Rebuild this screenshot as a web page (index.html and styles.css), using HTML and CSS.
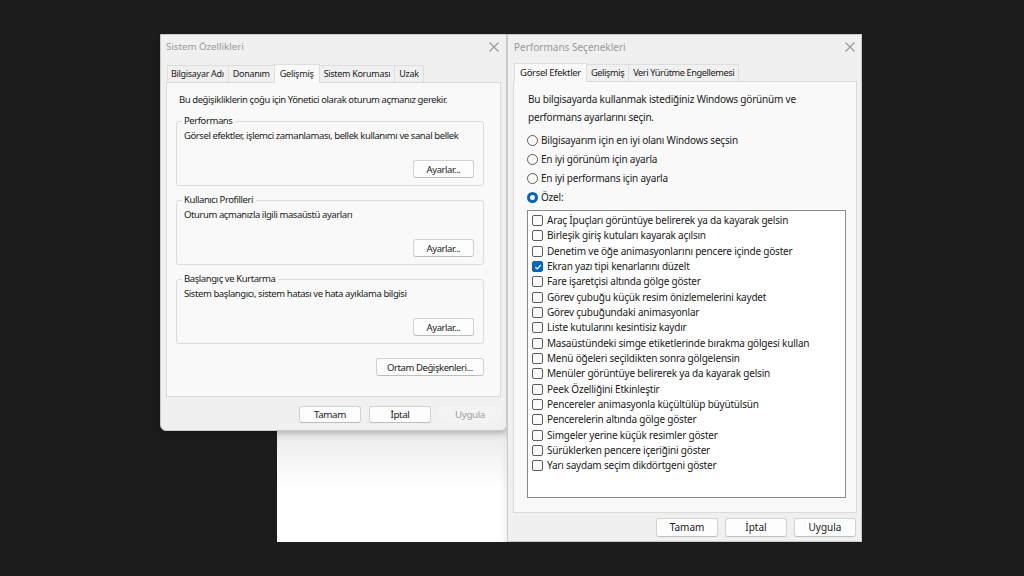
FILE: index.html
```html
<!DOCTYPE html>
<html lang="tr">
<head>
<meta charset="utf-8">
<title>Sistem Özellikleri</title>
<link rel="stylesheet" href="styles.css">
</head>
<body>
<div class="desktop">
  <div class="backwin"></div>

  <div class="dialog sys">
    <div class="titlebar">
      <span class="title">Sistem Özellikleri</span>
      <svg class="close" width="10" height="10" viewBox="0 0 10 10"><path d="M0.5 0.5 L9.5 9.5 M9.5 0.5 L0.5 9.5" stroke="#9a9a9a" stroke-width="1.1" fill="none"/></svg>
    </div>
    <div class="tabs">
      <span class="tab">Bilgisayar Adı</span>
      <span class="tab">Donanım</span>
      <span class="tab sel">Gelişmiş</span>
      <span class="tab">Sistem Koruması</span>
      <span class="tab">Uzak</span>
    </div>
    <div class="panel">
      <p class="intro">Bu değişikliklerin çoğu için Yönetici olarak oturum açmanız gerekir.</p>
      <div class="group">
        <span class="legend">Performans</span>
        <p class="gtext">Görsel efektler, işlemci zamanlaması, bellek kullanımı ve sanal bellek</p>
        <div class="grow"><button class="btn set">Ayarlar...</button></div>
      </div>
      <div class="group">
        <span class="legend">Kullanıcı Profilleri</span>
        <p class="gtext">Oturum açmanızla ilgili masaüstü ayarları</p>
        <div class="grow"><button class="btn set">Ayarlar...</button></div>
      </div>
      <div class="group">
        <span class="legend">Başlangıç ve Kurtarma</span>
        <p class="gtext">Sistem başlangıcı, sistem hatası ve hata ayıklama bilgisi</p>
        <div class="grow"><button class="btn set">Ayarlar...</button></div>
      </div>
      <div class="envrow"><button class="btn env">Ortam Değişkenleri...</button></div>
    </div>
    <div class="footer">
      <button class="btn fb">Tamam</button>
      <button class="btn fb">İptal</button>
      <button class="btn fb dis">Uygula</button>
    </div>
  </div>

  <div class="dialog perf">
    <div class="titlebar">
      <span class="title">Performans Seçenekleri</span>
      <svg class="close" width="10" height="10" viewBox="0 0 10 10"><path d="M0.5 0.5 L9.5 9.5 M9.5 0.5 L0.5 9.5" stroke="#9a9a9a" stroke-width="1.1" fill="none"/></svg>
    </div>
    <div class="tabs">
      <span class="tab sel">Görsel Efektler</span>
      <span class="tab">Gelişmiş</span>
      <span class="tab">Veri Yürütme Engellemesi</span>
    </div>
    <div class="panel">
      <p class="intro">Bu bilgisayarda kullanmak istediğiniz Windows görünüm ve performans ayarlarını seçin.</p>
      <div class="radios">
        <label class="radio"><span class="rb"></span>Bilgisayarım için en iyi olanı Windows seçsin</label>
        <label class="radio"><span class="rb"></span>En iyi görünüm için ayarla</label>
        <label class="radio"><span class="rb"></span>En iyi performans için ayarla</label>
        <label class="radio"><span class="rb on"></span>Özel:</label>
      </div>
      <div class="listbox">
        <div class="item"><span class="cb"></span>Araç İpuçları görüntüye belirerek ya da kayarak gelsin</div>
        <div class="item"><span class="cb"></span>Birleşik giriş kutuları kayarak açılsın</div>
        <div class="item"><span class="cb"></span>Denetim ve öğe animasyonlarını pencere içinde göster</div>
        <div class="item"><span class="cb on"><svg width="8" height="8" viewBox="0 0 8 8"><path d="M1.3 4.2 L3.2 6 L6.8 2" stroke="#fff" stroke-width="1.2" fill="none"/></svg></span>Ekran yazı tipi kenarlarını düzelt</div>
        <div class="item"><span class="cb"></span>Fare işaretçisi altında gölge göster</div>
        <div class="item"><span class="cb"></span>Görev çubuğu küçük resim önizlemelerini kaydet</div>
        <div class="item"><span class="cb"></span>Görev çubuğundaki animasyonlar</div>
        <div class="item"><span class="cb"></span>Liste kutularını kesintisiz kaydır</div>
        <div class="item"><span class="cb"></span>Masaüstündeki simge etiketlerinde bırakma gölgesi kullan</div>
        <div class="item"><span class="cb"></span>Menü öğeleri seçildikten sonra gölgelensin</div>
        <div class="item"><span class="cb"></span>Menüler görüntüye belirerek ya da kayarak gelsin</div>
        <div class="item"><span class="cb"></span>Peek Özelliğini Etkinleştir</div>
        <div class="item"><span class="cb"></span>Pencereler animasyonla küçültülüp büyütülsün</div>
        <div class="item"><span class="cb"></span>Pencerelerin altında gölge göster</div>
        <div class="item"><span class="cb"></span>Simgeler yerine küçük resimler göster</div>
        <div class="item"><span class="cb"></span>Sürüklerken pencere içeriğini göster</div>
        <div class="item"><span class="cb"></span>Yarı saydam seçim dikdörtgeni göster</div>
      </div>
    </div>
    <div class="footer">
      <button class="btn fb">Tamam</button>
      <button class="btn fb">İptal</button>
      <button class="btn fb">Uygula</button>
    </div>
  </div>
</div>
</body>
</html>
```

FILE: styles.css
```css
* { box-sizing: border-box; }
html, body { margin: 0; padding: 0; }
body {
  width: 1024px;
  height: 576px;
  background: #1c1c1c;
  overflow: hidden;
  font-family: "Noto Sans", "Open Sans", sans-serif;
  color: #1a1a1a;
}
.desktop { position: relative; width: 1024px; height: 576px; }
p { margin: 0; }

.backwin {
  position: absolute;
  left: 277px;
  top: 420px;
  width: 233px;
  height: 122px;
  background: linear-gradient(180deg, #e2e2e2 0px, #f2f2f2 30px, #ffffff 70px);
  box-shadow: inset -6px 0 8px -4px #d8d8d8;
}

.dialog {
  position: absolute;
  display: flex;
  flex-direction: column;
  background: #f0f0f0;
  border: 1px solid #c9c9c9;
  border-radius: 0 0 6px 6px;
}
.sys { left: 160px; top: 34px; width: 347px; height: 397px; box-shadow: 0 2px 6px rgba(0,0,0,0.25); }
.perf { left: 507px; top: 34px; width: 355px; height: 508px; border-radius: 0; }

.titlebar {
  height: 23px;
  display: flex;
  align-items: center;
  justify-content: space-between;
  padding: 0 7px 0 5px;
  flex: none;
}
.perf .titlebar { padding: 0 6px 0 6px; }
.title { font-size: 10px; color: #999; }
.sys .title { font-size: 9.7px; }
.close { display: block; }

.tabs {
  display: flex;
  align-items: flex-end;
  height: 24px;
  padding: 7px 0 0 6px;
  flex: none;
}
.tab {
  height: 17px;
  line-height: 16px;
  border: 1px solid #dedede;
  border-bottom: none;
  margin-right: -1px;
  background: #f0f0f0;
  color: #1a1a1a;
  white-space: nowrap;
}
.tab.sel {
  height: 19px;
  line-height: 17px;
  background: #f9f9f9;
  position: relative;
  z-index: 2;
  margin-bottom: -1px;
}

.panel {
  border: 1px solid #dadada;
  background: #f9f9f9;
  flex: none;
}

/* Sistem Özellikleri */
.sys .tab {
  font-size: 9px;
  letter-spacing: -0.3px;
  padding: 0 4px;
}
.sys .tab:first-child { padding-left: 3px; }
.sys .tab.sel { padding: 0 5px; font-size: 9.2px; }
.sys .panel {
  margin-left: 5px;
  width: 335px;
  height: 315px;
  padding: 10px 16px 0 9px;
  font-size: 9.5px;
  letter-spacing: -0.42px;
}
.sys .intro { padding-left: 3px; line-height: 14px; margin-bottom: 14px; }
.group {
  position: relative;
  border: 1px solid #dcdcdc;
  border-radius: 3px;
  height: 65px;
  padding: 7px 9px 0 7px;
  margin-bottom: 14px;
}
.legend {
  position: absolute;
  left: 5px;
  top: -8px;
  background: #f9f9f9;
  padding: 0 3px 0 2px;
  line-height: 14px;
}
.gtext { line-height: 14px; white-space: nowrap; }
.grow { display: flex; justify-content: flex-end; margin-top: 17px; }
.btn {
  font-family: inherit;
  font-size: inherit;
  letter-spacing: inherit;
  color: #1a1a1a;
  background: #fdfdfd;
  border: 1px solid #d2d2d2;
  border-bottom-color: #bdbdbd;
  border-radius: 3px;
  padding: 0;
  height: 18px;
  line-height: 15px;
}
.set { width: 61px; }
.envrow { display: flex; justify-content: flex-end; margin-top: 1px; }
.env { width: 108px; height: 18px; }

.footer {
  display: flex;
  justify-content: flex-end;
  gap: 8px;
  flex: none;
}
.sys .footer {
  padding: 9px 5px 0 0;
  font-size: 9.8px;
  letter-spacing: -0.4px;
}
.sys .fb { width: 62px; height: 17px; }
.fb.dis { color: #a0a0a0; background: #f3f3f3; border-color: #f3f3f3; }

/* Performans Seçenekleri */
.perf .tabs { padding-left: 6px; height: 23px; padding-top: 6px; }
.perf .tab { font-size: 9.2px; letter-spacing: -0.4px; padding: 0 4px 0 4px; }
.perf .tab.sel { padding: 0 5px; font-size: 9.6px; letter-spacing: -0.35px; }
.perf .panel {
  margin-left: 5px;
  width: 344px;
  height: 432px;
  padding: 8px 0 0 13px;
  font-size: 10px;
  letter-spacing: -0.2px;
}
.perf .intro { line-height: 18px; padding-left: 1px; width: 300px; }
.radios { display: flex; flex-direction: column; margin-top: 5px; }
.radio { display: flex; align-items: center; height: 19px; line-height: 19px; }
.rb {
  width: 11px;
  height: 11px;
  border: 1px solid #5c5c5c;
  border-radius: 50%;
  background: #fafafa;
  margin-right: 3px;
  flex: none;
}
.rb.on { border: 3px solid #0067c0; background: #fff; }

.listbox {
  margin-top: 3px;
  width: 319px;
  height: 288px;
  background: #fff;
  border: 1px solid #8a8a8a;
  padding: 2px 0 0 4px;
}
.item {
  display: flex;
  align-items: center;
  height: 15.33px;
  line-height: 15px;
  white-space: nowrap;
}
.cb {
  width: 11px;
  height: 11px;
  border: 1px solid #5c5c5c;
  border-radius: 2px;
  background: #fbfbfb;
  margin-right: 4px;
  flex: none;
  display: flex;
  align-items: center;
  justify-content: center;
}
.cb.on { background: #0067c0; border-color: #0067c0; }
.cb svg { display: block; }

.perf .footer {
  padding: 5px 5px 0 0;
  font-size: 10px;
  gap: 7px;
}
.perf .fb { width: 62px; height: 19px; }
```
